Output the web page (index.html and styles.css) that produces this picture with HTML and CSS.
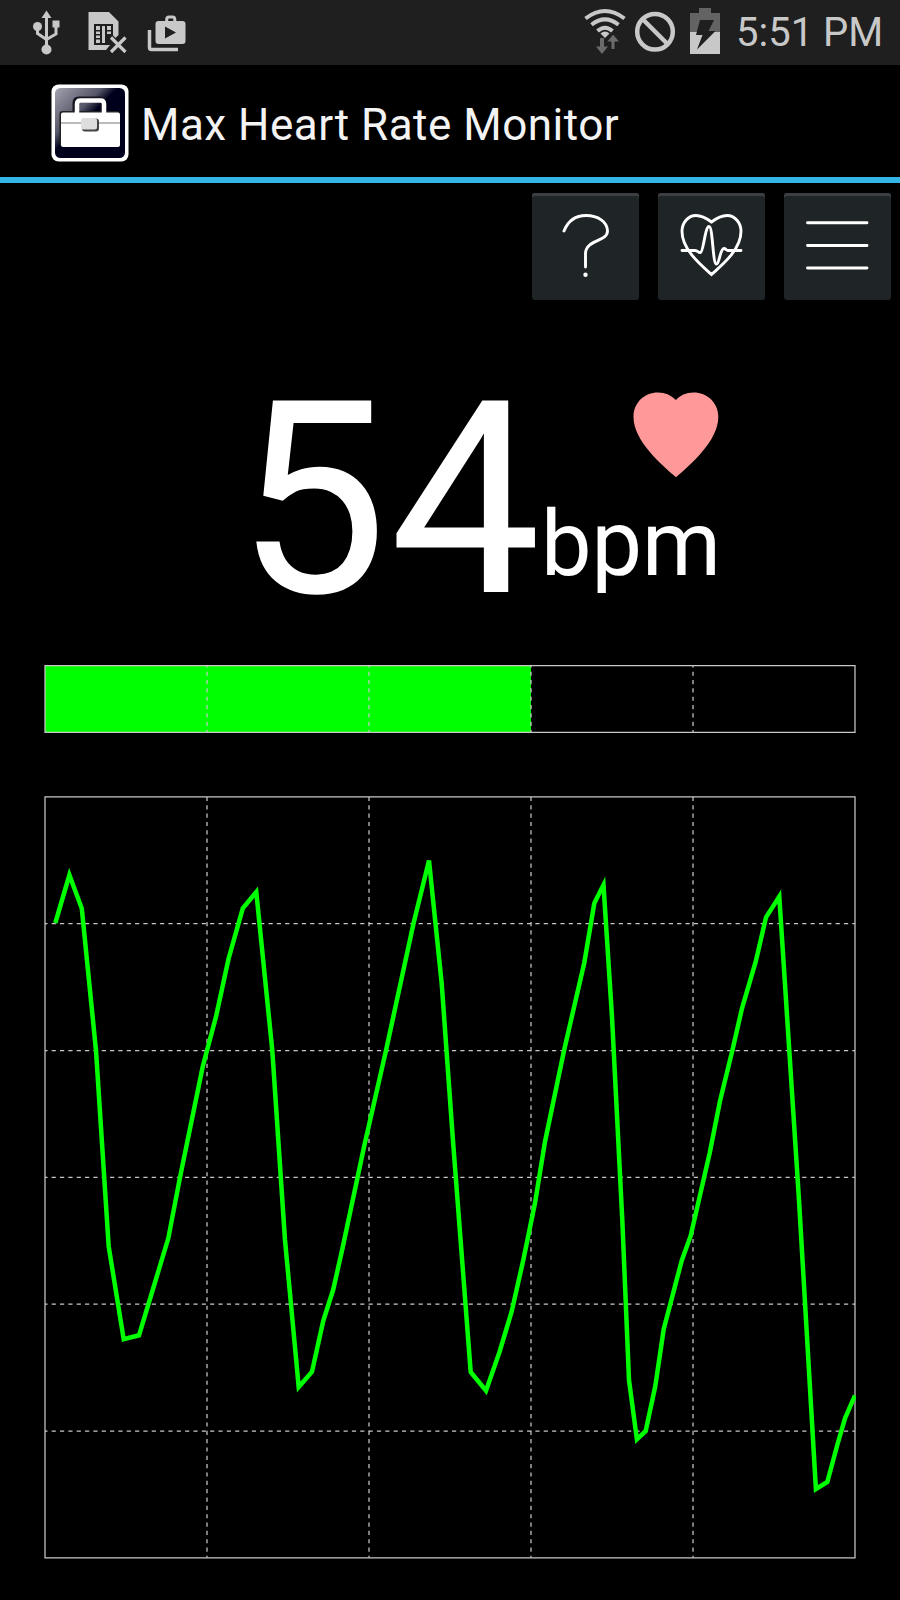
FILE: index.html
```html
<!DOCTYPE html>
<html lang="en">
<head>
    <meta charset="utf-8">
    <title>Max Heart Rate Monitor</title>
    <link rel="stylesheet" href="styles.css">
</head>
<body>
    <div class="statusbar">
        <svg class="notifications" width="200" height="65" viewBox="0 0 200 65">
            <!-- usb -->
            <g fill="none" stroke="#c8c8c8" stroke-width="3">
                <path d="M46.500 16V46M37.500 27V33.500L46.500 39.500M56 26V34L46.500 39.500"/>
            </g>
            <g fill="#c8c8c8">
                <path d="M46.500 10.500L51.500 18H41.500Z"/>
                <circle cx="37.500" cy="26.500" r="4.500"/>
                <rect x="52.500" y="20.500" width="7" height="7"/>
                <circle cx="46.500" cy="49.500" r="5"/>
            </g>
            <!-- sim card missing -->
            <path fill="#c8c8c8" d="M88.500 12H109L118.500 21.500V35L113.500 40L109 36L106 39.500L110.500 44.500L106 50H88.500Z"/>
            <rect x="94" y="24" width="19" height="21" fill="#1f1f1f"/>
            <path fill="#c8c8c8" d="M96 26h4v4h-4zM96 31.500h4v2.500h-4zM96 35.500h4v2.500h-4zM96 39.500h4v3.500h-4zM102 26h3v17h-3zM107 26h4v4h-4zM107 31.500h4v2.500h-4z"/>
            <path d="M111 37.500L126 52.500M126 37.500L111 52.500" stroke="#1f1f1f" stroke-width="6" fill="none"/>
            <path d="M111 37.500L125.500 52M125.500 37.500L111 52" stroke="#c8c8c8" stroke-width="3.200" fill="none"/>
            <!-- play store -->
            <path d="M149.500 30V47.500Q149.500 49.500 151.500 49.500H178" stroke="#c8c8c8" stroke-width="3.500" fill="none"/>
            <path d="M166.700 22V19.500Q166.700 17 169 17H172.500Q174.800 17 174.800 19.500V22" stroke="#c8c8c8" stroke-width="3" fill="none"/>
            <rect x="155.500" y="21" width="30" height="23" rx="3" fill="#c8c8c8"/>
            <path d="M165 26.500L176 32.500L165 38.500Z" fill="#1f1f1f"/>
        </svg>
        <svg class="system" width="140" height="65" viewBox="580 0 140 65">
            <!-- wifi -->
            <g fill="none" stroke="#c8c8c8" stroke-width="4">
                <path d="M585.500 18.500Q605 3.500 624.500 18.500"/>
                <path d="M591.500 24.800Q605 14 618.500 24.800"/>
                <path d="M597.500 31Q605 24.500 612.500 31"/>
            </g>
            <path fill="#c8c8c8" d="M600.500 33.500Q605 29.500 609.500 33.500L605 38Z"/>
            <path fill="#6b6b6b" d="M600 38H604V46.500H608L602 54L596 46.500H600Z"/>
            <path fill="#6b6b6b" stroke="#1f1f1f" stroke-width="1" d="M611 49.500H615V42H620L613 34L606.500 42H611Z"/>
            <!-- blocked -->
            <circle cx="655" cy="31.700" r="17.800" fill="none" stroke="#c8c8c8" stroke-width="4.500"/>
            <path d="M643 19.500L667.500 44" stroke="#c8c8c8" stroke-width="4.500"/>
            <!-- battery -->
            <path fill="#636363" d="M699 8H711V13H720V32H690V13H699Z"/>
            <rect x="690" y="32" width="30" height="22" fill="#c8c8c8"/>
            <path fill="#1f1f1f" d="M700 20H714L708.500 31H715.500L697 49.500L702.500 35H696Z"/>
        </svg>
        <span class="clock">5:51 PM</span>
    </div>

    <div class="titlebar">
        <svg class="appicon" width="78" height="78" viewBox="0 0 78 78">
            <defs>
                <linearGradient id="shine" x1="0" y1="0" x2="0.75" y2="0.75">
                    <stop offset="0" stop-color="#a3a3b0"/>
                    <stop offset="0.45" stop-color="#555568"/>
                    <stop offset="0.6" stop-color="#00001c"/>
                    <stop offset="1" stop-color="#00001c"/>
                </linearGradient>
            </defs>
            <rect x="0.500" y="0.500" width="77" height="77" rx="7" fill="#fff"/>
            <rect x="4" y="4" width="70" height="70" rx="5.500" fill="url(#shine)"/>
            <path d="M24.500 29V19Q24.500 15.500 28 15.500H49Q52.500 15.500 52.500 19V29" fill="none" stroke="#15151f" stroke-width="6"/>
            <rect x="8.500" y="27" width="60" height="35" rx="3" fill="#222"/>
            <path d="M26 30V20Q26 16.500 29.500 16.500H49.500Q53 16.500 53 20V30" fill="none" stroke="#fff" stroke-width="4.500"/>
            <rect x="10" y="28.500" width="59" height="34.500" rx="2" fill="#fff"/>
            <path d="M10 39H69" stroke="#777" stroke-width="1"/>
            <rect x="31" y="34.500" width="17" height="13" rx="3" fill="#444"/>
            <rect x="30" y="34" width="16" height="11.500" rx="2.500" fill="#dedede"/>
        </svg>
        <h1 class="title">Max Heart Rate Monitor</h1>
    </div>

    <div class="toolbar">
        <button class="tool">
            <svg width="107" height="107" viewBox="0 0 107 107">
                <path d="M32 38C36 28 44 22.500 54 22.500C66 22.500 75.500 29 75.500 38C75.500 49 53.500 46.500 53.500 60.500V74"/>
                <circle class="dot" cx="53.500" cy="81.700" r="2.200"/>
            </svg>
        </button>
        <button class="tool">
            <svg width="107" height="107" viewBox="0 0 107 107">
                <path d="M53.500 81.500C44 73 24 57 24 38.500C24 30 30 22.500 38 22.500C44.500 22.500 49.500 26 53.500 29C57.500 26 62.500 22.500 69 22.500C77 22.500 83 30 83 38.500C83 57 63 73 53.500 81.500Z"/>
                <path d="M24 57.500H37C40 57.500 40 60 42.500 59.500C45.500 59 47 33.500 51 33.500C55 33.500 54.500 71 58.500 71C61.500 71 62 55.500 66 55.500C68 55.500 68 57.500 70 57.500H83"/>
            </svg>
        </button>
        <button class="tool">
            <svg width="107" height="107" viewBox="0 0 107 107">
                <path d="M23.500 29.700H83M23.500 52.500H83M23.500 75H83"/>
            </svg>
        </button>
    </div>

    <div class="reading">
        <span class="value">54</span>
        <div class="side">
            <svg class="heart" width="86" height="86" viewBox="0 0 86 86">
                <path d="M43 85.300C29 73 0.500 49 0.500 25C0.500 10.500 11.500 0.500 25 0.500C32.500 0.500 38.500 3.500 42.800 8C47 3.500 53 0.500 60.500 0.500C74 0.500 85.300 10.500 85.300 25C85.300 49 57 73 43 85.300Z"/>
            </svg>
            <span class="unit">bpm</span>
        </div>
    </div>

    <svg class="progress" width="812" height="70" viewBox="44 664 812 70">
        <rect x="45" y="665" width="486" height="67.400" fill="#0f0"/>
        <g class="grid across">
            <path d="M207 665V732.400M369 665V732.400M531 665V732.400M693 665V732.400"/>
        </g>
        <path class="frame" d="M45 665.500H855V732.400H45Z"/>
    </svg>

    <svg class="chart" width="812" height="764" viewBox="44 795 812 764">
        <g class="grid">
            <path d="M207 796.900V1557.800M369 796.900V1557.800M531 796.900V1557.800M693 796.900V1557.800"/>
        </g>
        <g class="grid across">
            <path d="M45 923.700H855M45 1050.500H855M45 1177.300H855M45 1304.200H855M45 1431H855"/>
        </g>
        <path class="frame" d="M45 796.900H855V1557.800H45Z"/>
        <polyline class="pulse" points="55.300,923 69.400,875 81.800,908.500 96,1050.500 108.700,1246.500 123.700,1339.300 139,1335.300 153,1289 168.300,1238.300 180,1177.300 202.700,1066.700 216,1016.700 228.500,959 242.800,908.300 256.300,892 272.300,1050.500 285,1240 298.700,1387 312,1371.700 323.300,1320.700 333.300,1289.300 343,1246 364,1147 386,1050.500 413.500,923.500 429,860.500 441.700,983.500 453,1141 470.700,1372 486,1390.700 499.500,1352 511.700,1311.500 523.300,1260 535,1203 545,1141.700 564,1050.700 584.300,962.700 594.300,903.300 603.500,885 612,1017 622.300,1220 629,1380 636.900,1439.300 645.700,1431 655.300,1386 663.700,1329.300 681.700,1260.700 690.700,1235.700 709.700,1153 720,1101 732.300,1050.700 742,1008.300 755.700,961.700 766,917.300 779.300,896.500 789.300,1050.700 799,1200 815.900,1489 827.300,1482 837.300,1445 845,1418.300 855,1395.500"/>
    </svg>
</body>
</html>
```
FILE: styles.css
```css
* {
    box-sizing: border-box;
}

body {
    margin: 0;
    width: 900px;
    height: 1600px;
    background: #000;
    color: #fff;
    font-family: Roboto, sans-serif;
    overflow: hidden;
}

svg {
    display: block;
    flex: none;
}

/* android status bar */
.statusbar {
    display: flex;
    height: 65px;
    background: #1f1f1f;
    color: #c8c8c8;
}

.system {
    margin-left: auto;
}

.clock {
    width: 164px;
    margin-left: 16px;
    font-size: 40px;
    line-height: 66px;
    white-space: nowrap;
}

.titlebar {
    display: flex;
    height: 118px;
    padding: 19px 51px 0;
    border-bottom: 6px solid #33b5e5;
}

.title {
    margin: 15px 0 0 12px;
    color: #f3f3f3;
    font-size: 44px;
    font-weight: normal;
    letter-spacing: 0.500px;
    line-height: 52px;
    white-space: nowrap;
}

/* help, monitor and menu buttons */
.toolbar {
    display: flex;
    justify-content: flex-end;
    gap: 19px;
    padding: 10px 9.500px 0 0;
}

.tool {
    width: 107px;
    height: 107px;
    padding: 0;
    border: none;
    border-radius: 3px;
    background: #1f2427;
    box-shadow: inset 0 3px 0 #3c3f41;
}

.tool path {
    fill: none;
    stroke: #fff;
    stroke-width: 2.900px;
    stroke-linecap: round;
}

.dot {
    fill: #fff;
}

.reading {
    display: flex;
    justify-content: flex-end;
    height: 365px;
    padding-right: 181px;
}

.value {
    margin-top: 40px;
    margin-right: -2px;
    font-size: 269.500px;
    letter-spacing: 2px;
    line-height: 320px;
}

.side {
    display: flex;
    flex-direction: column;
    align-items: flex-end;
    padding-top: 92px;
}

.heart {
    fill: #f99;
}

.unit {
    margin-top: 14px;
    margin-right: -2px;
    font-size: 90px;
    line-height: 106px;
}

.progress {
    margin: -1px 0 0 44px;
}

.chart {
    margin: 61px 0 0 44px;
}

.frame {
    fill: none;
    stroke: #c8c8c8;
    stroke-width: 1.250px;
}

.grid path {
    fill: none;
    stroke: #c8c8c8;
    stroke-width: 1.250px;
    stroke-dasharray: 4.170px 4.170px;
}

.across path {
    stroke-dashoffset: 1.670px;
}

.pulse {
    fill: none;
    stroke: #0f0;
    stroke-width: 4.500px;
    stroke-miterlimit: 4;
}
```
